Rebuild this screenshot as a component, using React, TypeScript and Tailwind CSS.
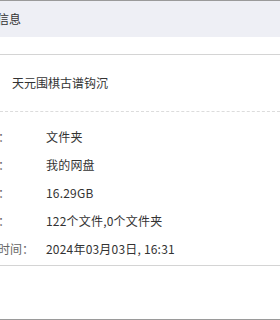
import React from "react";

const font = { fontFamily: '"Microsoft YaHei", "Noto Sans CJK SC", "Noto Sans", sans-serif' };

const rows: [string, string][] = [
  ["类型：", "文件夹"],
  ["位置：", "我的网盘"],
  ["大小：", "16.29GB"],
  ["包含：", "122个文件,0个文件夹"],
  ["修改时间：", "2024年03月03日, 16:31"],
];

export default function App() {
  return (
    <div className="w-[280px] h-[320px] overflow-hidden bg-white flex flex-col text-[12px] text-[#333]" style={font}>
      <div className="h-px bg-[#9a9a9a]" />
      <div className="h-[36px] bg-[#eeeff5] flex items-center">
        <span className="ml-[-3px] text-[12px] text-[#333]">信息</span>
      </div>
      <div className="h-[17px]" />
      <div className="h-px bg-[#d4d4d4]" />
      <div className="h-[56px] flex items-center pl-[12px]">
        <span className="text-[12px] text-[#333]">天元围棋古谱钩沉</span>
      </div>
      <div className="border-t border-dashed border-[#dcdcdc]" />
      <div className="pt-[11px] pb-[2px] flex flex-col">
        {rows.map(([k, v]) => (
          <div key={k} className="h-[28px] flex items-center">
            <span className="ml-[-26px] w-[72px] shrink-0 text-[#666] whitespace-nowrap">{k}</span>
            <span className="whitespace-nowrap text-[#333] tracking-[0.2px]">{v}</span>
          </div>
        ))}
      </div>
      <div className="h-px bg-[#d4d4d4]" />
      <div className="flex-1" />
      <div className="h-px bg-[#9a9a9a]" />
    </div>
  );
}
